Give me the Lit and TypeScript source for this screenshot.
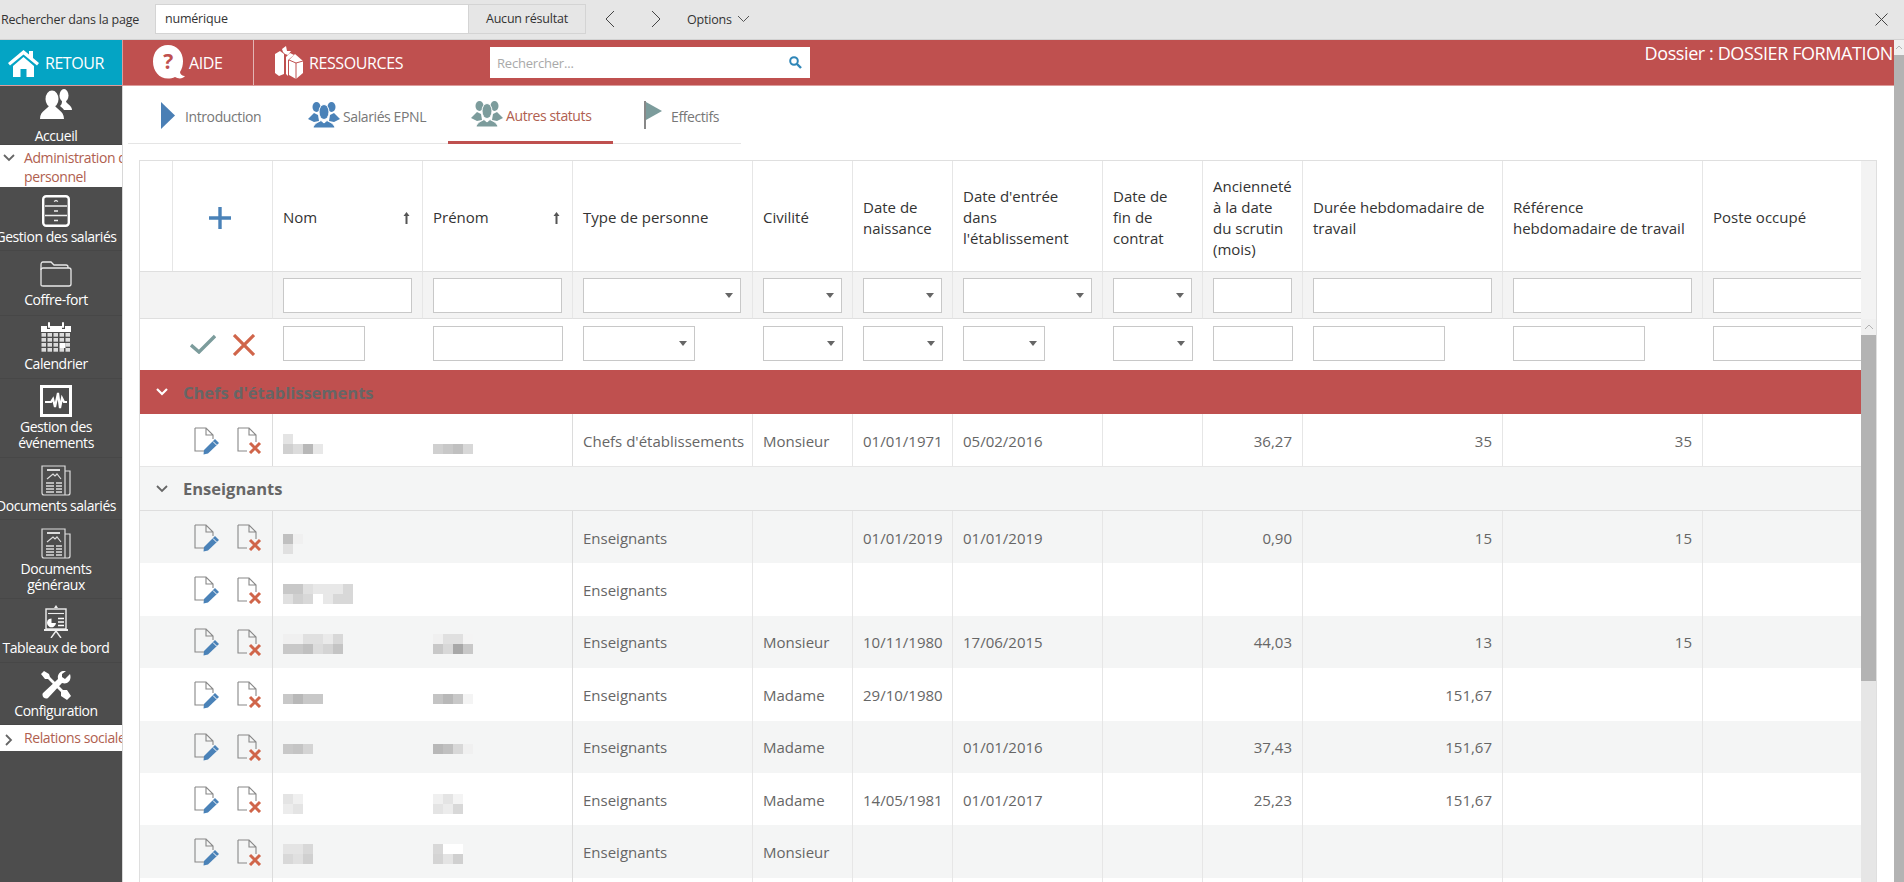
import { LitElement, html, css, svg } from "lit";
import { customElement } from "lit/decorators.js";

const people = (c: string) => html`<svg width="32" height="26" viewBox="0 0 32 26"><g fill="${c}">
<ellipse cx="8.500" cy="5" rx="4" ry="5"/><ellipse cx="23.500" cy="5" rx="4" ry="5"/>
<path d="M0 17 L6 11 L10 13 L11 19 L6 20Z"/><path d="M32 17 L26 11 L22 13 L21 19 L26 20Z"/>
<ellipse cx="16" cy="10" rx="5" ry="7.500" stroke="#fff" stroke-width="1"/>
<path d="M5 26 C6 21 11 20 13 18.500 L16 21 L19 18.500 C21 20 26 21 27 26Z" stroke="#fff" stroke-width="1"/></g></svg>`;

const sideIcons: Record<string, unknown> = {
  accueil: html`<svg width="32" height="30" viewBox="0 0 32 30"><g fill="#fff">
<ellipse cx="24" cy="6.500" rx="4.500" ry="6.500"/>
<path d="M22 12 L26 12 C26 15 32 16 32 21 H24 C23 19 21 18 20 17 C21.500 16 22 14 22 12Z"/>
<ellipse cx="12" cy="10" rx="6.500" ry="8.500"/>
<path d="M9 16 L15 16 C15 20 24 21 24 30 H0 C0 21 9 20 9 16Z"/></g></svg>`,
  cabinet: html`<svg width="28" height="32" viewBox="0 0 28 32"><rect x="1.200" y="1.200" width="25.600" height="29.600" rx="3" fill="none" stroke="#fff" stroke-width="2.400"/><g fill="none" stroke="#eee" stroke-width="1.300"><path d="M3 11 H25 M3 20.500 H25"/><path d="M12 6.500 L14 5.500 L16 6.500 M12 16 H16 M12 25.500 H16"/></g></svg>`,
  folder: html`<svg width="32" height="26" viewBox="0 0 32 26"><g fill="none" stroke="#e8e8e8" stroke-width="1.300"><path d="M1 24 V4 Q1 1 3 1 H11 L14 4 H26 Q28 4 28 6 V7"/><path d="M1 24 Q1 25 3 25 H29 Q31 25 31 23 V9 Q31 7 29 7 H16"/><path d="M1 9 Q1 7 3 7 H16"/></g></svg>`,
  calendar: html`<svg width="30" height="31" viewBox="0 0 30 31"><g fill="#fff"><path d="M0 4 H6 V7 H9 V4 H21 V7 H24 V4 H30 V10 H0Z"/><rect x="7" y="0" width="2" height="6" rx="1"/><rect x="21" y="0" width="2" height="6" rx="1"/>
${[0, 1, 2, 3, 4].map((c) => [0, 1, 2, 3].map((r) => svg`<rect x="${c * 6 + 0.500}" y="${r * 5 + 11}" width="${c === 3 && r === 2 ? 6 : 4.500}" height="${c === 3 && r === 2 ? 5 : 3.700}" opacity="${c === 3 && r === 2 ? 1 : 0.8}"/>`))}</g></svg>`,
  pulse: html`<svg width="32" height="32" viewBox="0 0 32 32"><rect width="32" height="32" fill="#fff"/><rect x="3" y="3" width="26" height="26" fill="#4d4d4d"/><path d="M5 17 H11 L13 14 L15 22 L18 8 L20 23 L22 13 L24 17 H27" fill="none" stroke="#fff" stroke-width="2.200"/></svg>`,
  doc: html`<svg width="30" height="31" viewBox="0 0 30 31"><g fill="none" stroke="#ddd" stroke-width="1.200"><path d="M24 6 H29 V28 Q29 30 27 30 H3 Q1 30 1 28 V1 H24 V30"/><path d="M6 5 H19" stroke-width="2"/><path d="M6 14 L12 9 L14 11 L16 9 L20 14"/><path d="M5 18h8M5 21h8M5 24h8M5 27h8M15 18h6M15 21h6M15 24h6M15 27h6" stroke-width="1.500"/></g></svg>`,
  board: html`<svg width="24" height="33" viewBox="0 0 24 33"><path d="M12 0 L10 3 H14Z" fill="#eee"/><rect x="0" y="24" width="24" height="2" fill="#eee"/><g fill="none" stroke="#eee" stroke-width="1.400"><rect x="2" y="4" width="20" height="20"/><path d="M12 26 L7 33M12 26 L17 33"/></g><path d="M5 14 a4.500 4.500 0 1 0 7 4 h-4.500v-4.500z" fill="#fff"/><path d="M14 13.500h6M14 17h6M14 20.500h6" stroke="#fff" stroke-width="1.400"/><path d="M4 8.500h16" stroke="#eee" stroke-width="1.100"/></svg>`,
  wrench: html`<svg width="30" height="29" viewBox="0 0 30 29"><g fill="#fff"><path d="M3 0 L8 3 L9 6 L22 19 L26 19 L30 25 L26 29 L20 25 L20 21 L7 8 L4 8 L0 3Z" /><path d="M29 3 L24 8 L21 6 L21 3 L25 0 C20 -1 16 3 17 8 L2 22 C0 25 4 29 7 27 L21 12 C27 14 31 9 29 3Z"/></g></svg>`,
};

const sideItems: any[] = [
  { k: "accueil", l: ["Accueil"], h: 59, p: 0, g: 6 },
  { acc: true, open: true, l: ["Administration du", "personnel"], h: 42 },
  { k: "cabinet", l: ["Gestion des salariés"], h: 64, p: 6, g: 0 },
  { k: "folder", l: ["Coffre-fort"], h: 65, p: 5, g: 0 },
  { k: "calendar", l: ["Calendrier"], h: 63, p: 3, g: 1 },
  { k: "pulse", l: ["Gestion des", "événements"], h: 79, p: 4, g: 0 },
  { k: "doc", l: ["Documents salariés"], h: 62, p: 4, g: 0 },
  { k: "doc", l: ["Documents", "généraux"], h: 79, p: 5, g: 0 },
  { k: "board", l: ["Tableaux de bord"], h: 64, p: 4, g: 1 },
  { k: "wrench", l: ["Configuration"], h: 62, p: 4, g: 0 },
  { acc: true, open: false, l: ["Relations sociales"], h: 26 },
];

const headers: { l: string[]; sort?: boolean }[] = [
  { l: ["Nom"], sort: true },
  { l: ["Prénom"], sort: true },
  { l: ["Type de personne"] },
  { l: ["Civilité"] },
  { l: ["Date de", "naissance"] },
  { l: ["Date d'entrée", "dans", "l'établissement"] },
  { l: ["Date de", "fin de", "contrat"] },
  { l: ["Ancienneté", "à la date", "du scrutin", "(mois)"] },
  { l: ["Durée hebdomadaire de", "travail"] },
  { l: ["Référence", "hebdomadaire de travail"] },
  { l: ["Poste occupé"] },
];

// kind: i = input, s = select ; width of the control in the filter row and in the add row
const controls: any[] = [
  ["i", 129, 82], ["i", 129, 130], ["s", 158, 112], ["s", 79, 80], ["s", 79, 80], ["s", 129, 82],
  ["s", 79, 80], ["i", 79, 80], ["i", 179, 132], ["i", 179, 132], ["i", 170, 170],
];

type Row = { m1?: string[][]; m2?: string[][]; t1?: number; t2?: number; v: string[] };
const chefs: Row = {
  m1: [["e4"], ["d0", "dc", "b8", "e8"]], t1: 20,
  m2: [["fff"], ["d0", "c8", "c0", "d8"]], t2: 20,
  v: ["Chefs d'établissements", "Monsieur", "01/01/1971", "05/02/2016", "", "36,27", "35", "35", ""],
};
const ens: Row[] = [
  { m1: [["c0", "f0"], ["e0"]], t1: 23, v: ["Enseignants", "", "01/01/2019", "01/01/2019", "", "0,90", "15", "15", ""] },
  { m1: [["c8", "c8", "e0", "e8", "e8", "e8", "d8"], ["e0", "d0", "d8", "fff", "e8", "d8", "d8"]], t1: 21, v: ["Enseignants", "", "", "", "", "", "", "", ""] },
  { m1: [["f0", "f0", "e0", "e0", "ea", "d8"], ["c8", "c8", "c0", "dc", "d4", "c4"]], t1: 18, m2: [["f0", "e0", "e0", "f4"], ["c8", "d8", "a8", "c8"]], t2: 18, v: ["Enseignants", "Monsieur", "10/11/1980", "17/06/2015", "", "44,03", "13", "15", ""] },
  { m1: [["c8", "b8", "c8", "c8"]], t1: 26, m2: [["c4", "b8", "c8", "f4"]], t2: 26, v: ["Enseignants", "Madame", "29/10/1980", "", "", "", "151,67", "", ""] },
  { m1: [["c8", "c4", "d4"]], t1: 23, m2: [["b8", "c0", "d8", "f0"]], t2: 23, v: ["Enseignants", "Madame", "", "01/01/2016", "", "37,43", "151,67", "", ""] },
  { m1: [["e4", "f0"], ["ec", "e4"]], t1: 21, m2: [["f0", "e4", "f4"], ["e4", "ec", "d8"]], t2: 21, v: ["Enseignants", "Madame", "14/05/1981", "01/01/2017", "", "25,23", "151,67", "", ""] },
  { m1: [["e4", "e4", "d8"], ["d8", "e0", "d0"]], t1: 19, m2: [["d8", "fff", "fff"], ["d4", "e4", "d0"]], t2: 19, v: ["Enseignants", "Monsieur", "", "", "", "", "", "", ""] },
  { v: ["", "", "", "", "", "", "", "", ""] },
];
const hex = (s: string) => "#" + (s.length === 2 ? s + s + s : s);
const rightAligned = [5, 6, 7];

@customElement("app-root")
export class AppRoot extends LitElement {
  static styles = css`
    :host { display: block; width: 1904px; height: 882px; overflow: hidden; background: #fff; font-family: "Open Sans", sans-serif; font-size: 14px; color: #666; }
    * { box-sizing: border-box; }
    .find { height: 40px; background: #e6e6e6; border-bottom: 1px solid #d2d2d2; display: flex; align-items: center; color: #333; padding: 0 16px 1px 1px; font-size: 12.500px; letter-spacing: -0.2px; }
    .find-label { width: 154px; }
    .find-input { width: 314px; height: 30px; background: #fff; border: 1px solid #d4d4d4; padding: 0 9px; line-height: 28px; }
    .find-res { width: 117px; height: 30px; border: 1px solid #d4d4d4; border-left: 0; text-align: center; line-height: 28px; }
    .find-nav { display: flex; align-items: center; margin-left: 19px; }
    .find-nav svg { display: block; }
    .find-next { margin-left: 36px; }
    .find-opt { margin-left: 26px; display: flex; align-items: center; gap: 5px; }
    .find-close { margin-left: auto; display: flex; }
    .page { display: flex; height: 842px; }
    .main { flex: 1; min-width: 0; display: flex; flex-direction: column; }
    .vbar { width: 10px; background: #b3b3b3; }
    .vbar-up { height: 15px; background: #f0f0f0; display: flex; align-items: center; justify-content: center; }
    .head { height: 46px; flex: none; background: #bf504f; border-bottom: 1px solid #dc9c9b; display: flex; color: #fff; font-size: 16px; }
    .retour { width: 122px; background: #04a4c4; display: flex; align-items: center; padding-left: 8px; gap: 6px; letter-spacing: -0.45px; }
    .aide { width: 132px; border-right: 1px solid #e3b5b4; border-left: 1px solid #dc9c9b; display: flex; align-items: center; padding-left: 30px; gap: 4px; letter-spacing: -0.4px; }
    .res { display: flex; align-items: center; padding-left: 20px; gap: 6px; width: 236px; letter-spacing: -0.4px; white-space: nowrap; }
    .search { width: 320px; height: 31px; background: #fff; margin-top: 7px; display: flex; align-items: center; justify-content: space-between; padding: 0 8px 0 7px; color: #a9a9a9; font-size: 13px; letter-spacing: -0.2px; }
    .dossier { margin-left: auto; font-size: 18px; line-height: 26px; padding-right: 1px; white-space: nowrap; letter-spacing: -0.4px; }
    .body { flex: 1; min-height: 0; display: flex; }
    .side { width: 123px; flex: none; background: #4d4d4d; border-right: 1px solid #d8d8d8; color: #fff; overflow: hidden; }
    .item { display: flex; flex-direction: column; align-items: center; border-bottom: 1px solid #474747; padding-right: 10px; }
    .ico { height: 36px; display: flex; align-items: center; justify-content: center; flex: none; }
    .lab { line-height: 16px; text-align: center; white-space: nowrap; letter-spacing: -0.45px; }
    .acc { background: #fff; color: #b0604f; display: flex; align-items: flex-start; white-space: nowrap; overflow: hidden; line-height: 19px; padding-top: 3px; letter-spacing: -0.4px; }
    .acc-i { width: 24px; flex: none; display: flex; justify-content: center; padding-right: 6px; padding-top: 6px; }
    .content { flex: 1; min-width: 0; padding-left: 5px; display: flex; flex-direction: column; }
    .tabs { display: grid; grid-template-columns: 160px 160px 165px 128px; width: 613px; height: 58px; flex: none; border-bottom: 1px solid #e5e5e5; color: #777; letter-spacing: -0.4px; }
    .tab { display: flex; align-items: center; padding-top: 3px; white-space: nowrap; }
    .tab svg { margin-top: -2px; }
    .t1 { padding-left: 33px; gap: 10px; }
    .t2 { padding-left: 20px; gap: 3px; }
    .t3 { padding-left: 23px; gap: 3px; color: #b0604f; border-bottom: 3px solid #bf504f; margin-bottom: -1px; }
    .t4 { padding-left: 31px; gap: 9px; }
    .table { margin: 16px 17px 0 11px; border-top: 1px solid #dfdfdf; border-left: 1px solid #dfdfdf; border-right: 1px solid #dfdfdf; display: grid; grid-template-columns: 1721px 16px; grid-template-rows: 158px 1fr; flex: 1; min-height: 0; overflow: hidden; font-size: 15px; }
    .gut { background: #f3f3f3; }
    .sb { background: #e6e6e6; display: flex; flex-direction: column; }
    .sb-up { height: 16px; background: #f0f0f0; display: flex; align-items: center; justify-content: center; }
    .sb-th { height: 346px; background: #b3b3b3; }
    .tscroll { overflow: hidden; min-height: 0; }
    .cols { display: grid; grid-template-columns: 33px 100px 150px 150px 180px 100px 100px 150px 100px 100px 200px 200px 159px; width: 1721px; }
    .hc { height: 110px; border-right: 1px solid #e6e6e6; color: #333; display: flex; align-items: center; justify-content: space-between; padding: 3px 10px 0 10px; line-height: 21px; white-space: nowrap; }
    .hc svg { flex: none; margin-right: 2px; }
    .hc.lastc { border-right: 0; }
    .h0 { border-right: 1px solid #e6e6e6; height: 110px; }
    .h1 { justify-content: center; padding: 4px 4px 0 0; }
    .fl { height: 48px; background: #f3f3f3; border-top: 1px solid #dfdfdf; border-bottom: 1px solid #dfdfdf; border-right: 1px solid #e6e6e6; padding: 6px 0 0 10px; overflow: hidden; }
    .fl.span2 { grid-column: span 2; padding: 0; }
    .ctl { height: 35px; background: #fff; border: 1px solid #c8c8c8; position: relative; }
    .sel::after { content: ""; position: absolute; right: 7px; top: 14px; border: 4.500px solid transparent; border-top: 5px solid #666; border-bottom: 0; }
    .add { height: 51px; padding: 7px 0 0 10px; overflow: hidden; }
    .add.act { grid-column: span 2; padding: 15px 0 0 50px; display: flex; gap: 17px; align-items: flex-start; }
    .group { height: 44px; display: flex; align-items: center; font-weight: 700; font-size: 16.500px; color: #666; border-bottom: 1px solid #dedede; }
    .group.red { background: #bf504f; border-bottom: 0; }
    .group.grey { background: #f4f5f5; }
    .grp-i { width: 43px; display: flex; justify-content: center; }
    .row { height: 52.400px; }
    .row.first { height: 53px; border-bottom: 1px solid #e6e6e6; }
    .row.alt { background: #f4f5f5; }
    .c { border-right: 1px solid #e6e6e6; display: flex; align-items: center; padding: 1px 10px 0; white-space: nowrap; overflow: hidden; height: 100%; }
    .c.r { justify-content: flex-end; }
    .c.last { border-right: 0; }
    .acts { grid-column: span 2; padding: 1px 0 0 54px; gap: 17px; border-right: 1px solid #dcdcdc; }
    .blur { padding: 0 0 0 10px; display: block; border: 0; }
    .blur.b2 { border-right: 1px solid #dcdcdc; }
    .m { display: flex; height: 10px; }
    .m i { display: block; width: 10px; height: 10px; }
  `;

  private editIcon() {
    return html`<svg width="26" height="28" viewBox="0 0 26 28"><path d="M1 1 H12 L19 8 V12 M12 1 V8 H19 M1 1 V24 H10" fill="none" stroke="#888" stroke-width="1.100"/><path d="M21 12 L25 16 L14 26.500 L9.500 27.500 L10 23Z" fill="#4a82b8"/><path d="M19 14.500 L22.500 18" stroke="#fff" stroke-width="1"/></svg>`;
  }
  private delIcon() {
    return html`<svg width="25" height="27" viewBox="0 0 25 27"><path d="M1 1 H12 L19 8 V15 M12 1 V8 H19 M1 1 V24 H10" fill="none" stroke="#888" stroke-width="1.100"/><path d="M13 16 L23 26 M23 16 L13 26" stroke="#d0654a" stroke-width="3"/></svg>`;
  }
  private chevD(c: string, w = 1.800) {
    return html`<svg width="12" height="8" viewBox="0 0 12 8"><path d="M1 1 L6 6 L11 1" fill="none" stroke="${c}" stroke-width="${w}"/></svg>`;
  }
  private mosaic(m: string[][] | undefined, top: number | undefined) {
    if (!m) return "";
    return html`<div style="margin-top:${top ?? 0}px">${m.map((r) => html`<div class="m">${r.map((p) => html`<i style="background:${hex(p)}"></i>`)}</div>`)}</div>`;
  }
  private dataRow(r: Row, cls: string) {
    return html`<div class="cols row ${cls}">
      <div class="c acts">${r.v[0] ? html`${this.editIcon()}${this.delIcon()}` : ""}</div>
      <div class="c blur">${this.mosaic(r.m1, r.t1)}</div>
      <div class="c blur b2">${this.mosaic(r.m2, r.t2)}</div>
      ${r.v.map((t, i) => html`<div class="c ${rightAligned.includes(i) ? "r" : ""} ${i === 8 ? "last" : ""}">${t}</div>`)}
    </div>`;
  }

  render() {
    return html`
      <div class="find">
        <div class="find-label">Rechercher dans la page</div>
        <div class="find-input">numérique</div>
        <div class="find-res">Aucun résultat</div>
        <div class="find-nav">
          <svg width="10" height="18" viewBox="0 0 10 18"><path d="M9 1 L1 9 L9 17" fill="none" stroke="#444" stroke-width="1"/></svg>
          <svg class="find-next" width="10" height="18" viewBox="0 0 10 18"><path d="M1 1 L9 9 L1 17" fill="none" stroke="#444" stroke-width="1"/></svg>
        </div>
        <div class="find-opt">Options <svg width="13" height="8" viewBox="0 0 13 8"><path d="M1 1 L6.500 6.500 L12 1" fill="none" stroke="#555" stroke-width="1"/></svg></div>
        <div class="find-close"><svg width="13" height="13" viewBox="0 0 13 13"><path d="M0.500 0.500 L12.500 12.500 M12.500 0.500 L0.500 12.500" stroke="#444" stroke-width="1"/></svg></div>
      </div>
      <div class="page">
        <div class="main">
          <div class="head">
            <div class="retour">
              <svg width="31" height="28" viewBox="0 0 31 28"><path d="M15.500 1 L0 14 L2 16.500 L15.500 5.500 L29 16.500 L31 14 L25 9 V2 H21 V5.500Z" fill="#fff"/><path d="M5 17 L15.500 8 L26 17 V28 H18.500 V20 H12.500 V28 H5Z" fill="#fff"/></svg>
              RETOUR
            </div>
            <div class="aide">
              <svg width="32" height="35" viewBox="0 0 32 35"><path d="M15 0 C24 0 30 7 30 16 C30 20 29 24 27 27 C27 29 29 31 32 31 C30 34 25 34 22 32 C20 33 17 33.500 15 33.500 C6 33.500 0 26 0 16.500 C0 7 6 0 15 0Z" fill="#fff"/><text x="15" y="24" text-anchor="middle" font-family="Open Sans, sans-serif" font-weight="700" font-size="21" fill="#bf504f">?</text></svg>
              AIDE
            </div>
            <div class="res">
              <svg width="29" height="33" viewBox="0 0 29 33"><g fill="#fff"><path d="M1 8 L6 5 L10 8 L10 28 L5 30 L1 27Z"/><path d="M8 3 L12 0 L13 5 L17 5 L14 9 L11 8 L9 6Z"/><path d="M12 11 L16 7 L20 9 L14 14 L14 30 L12 28Z"/><path d="M15 14 L21 8 L29 15 L29 27 L22 33 L15 29Z"/></g><path d="M22 33 V17 L29 15 M15 14 L22 17" stroke="#bf504f" stroke-width="1" fill="none"/></svg>
              RESSOURCES
            </div>
            <div class="search">
              Rechercher...
              <svg width="13" height="13" viewBox="0 0 13 13"><circle cx="5" cy="5" r="3.800" fill="none" stroke="#2f86b8" stroke-width="2"/><path d="M8 8 L12 12" stroke="#2f86b8" stroke-width="2.400"/></svg>
            </div>
            <div class="dossier">Dossier : DOSSIER FORMATION</div>
          </div>
          <div class="body">
            <div class="side">
              ${sideItems.map((it) =>
                it.acc
                  ? html`<div class="acc" style="height:${it.h}px">
                      <div class="acc-i">${it.open
                        ? this.chevD("#666")
                        : html`<svg width="8" height="12" viewBox="0 0 8 12"><path d="M1 1 L6 6 L1 11" fill="none" stroke="#666" stroke-width="1.800"/></svg>`}</div>
                      <div>${it.l.map((t: string) => html`<div>${t}</div>`)}</div>
                    </div>`
                  : html`<div class="item" style="height:${it.h}px;padding-top:${it.p}px">
                      <div class="ico" style="margin-bottom:${it.g}px">${sideIcons[it.k]}</div>
                      ${it.l.map((t: string) => html`<div class="lab">${t}</div>`)}
                    </div>`
              )}
            </div>
            <div class="content">
              <div class="tabs">
                <div class="tab t1"><svg width="14" height="27" viewBox="0 0 14 27"><path d="M0 0 L14 13.500 L0 27Z" fill="#4a7fb5"/></svg>Introduction</div>
                <div class="tab t2">${people("#4a82b8")}Salariés EPNL</div>
                <div class="tab t3">${people("#7c9c9c")}Autres statuts</div>
                <div class="tab t4"><svg width="18" height="28" viewBox="0 0 18 28"><path d="M1 0 V28" stroke="#888" stroke-width="2"/><path d="M2 1 L18 10 L2 19Z" fill="#7c9c9c"/></svg>Effectifs</div>
              </div>
              <div class="table">
                <div class="cols">
                  <div class="h0"></div>
                  <div class="hc h1"><svg width="22" height="22" viewBox="0 0 22 22"><path d="M11 0 V22 M0 11 H22" stroke="#4a82b8" stroke-width="3.400"/></svg></div>
                  ${headers.map(
                    (h, i) => html`<div class="hc ${i === 10 ? "lastc" : ""}"><span>${h.l.map((t) => html`<div>${t}</div>`)}</span>${h.sort
                      ? html`<svg width="7" height="12" viewBox="0 0 7 12"><path d="M3.500 0 L6.500 4 H4.500 V12 H2.500 V4 H0.500Z" fill="#555"/></svg>`
                      : ""}</div>`
                  )}
                  <div class="fl span2"></div>
                  ${controls.map(
                    (c) => html`<div class="fl"><div class="ctl ${c[0] === "s" ? "sel" : ""}" style="width:${c[1]}px"></div></div>`
                  )}
                </div>
                <div class="gut"></div>
                <div class="tscroll">
                  <div class="cols">
                    <div class="add act">
                      <svg width="26" height="20" viewBox="0 0 26 20"><path d="M1 11 L9 18 L25 2" fill="none" stroke="#7c9c9c" stroke-width="3.400"/></svg>
                      <svg width="22" height="22" viewBox="0 0 22 22"><path d="M1 1 L21 21 M21 1 L1 21" stroke="#d0654a" stroke-width="3.200"/></svg>
                    </div>
                    ${controls.map(
                      (c) => html`<div class="add"><div class="ctl ${c[0] === "s" ? "sel" : ""}" style="width:${c[2]}px"></div></div>`
                    )}
                  </div>
                  <div class="group red"><div class="grp-i">${this.chevD("#fff", 2.200)}</div>Chefs d'établissements</div>
                  ${this.dataRow(chefs, "first")}
                  <div class="group grey"><div class="grp-i">${this.chevD("#666")}</div>Enseignants</div>
                  ${ens.map((r, i) => this.dataRow(r, i % 2 === 0 ? "alt" : ""))}
                </div>
                <div class="sb">
                  <div class="sb-up"><svg width="10" height="6" viewBox="0 0 10 6"><path d="M1 5 L5 1 L9 5" fill="none" stroke="#b3b3b3" stroke-width="1"/></svg></div>
                  <div class="sb-th"></div>
                </div>
              </div>
            </div>
          </div>
        </div>
        <div class="vbar"><div class="vbar-up"><svg width="8" height="5" viewBox="0 0 8 5"><path d="M1 4 L4 1 L7 4" fill="none" stroke="#b3b3b3" stroke-width="1"/></svg></div></div>
      </div>
    `;
  }
}
